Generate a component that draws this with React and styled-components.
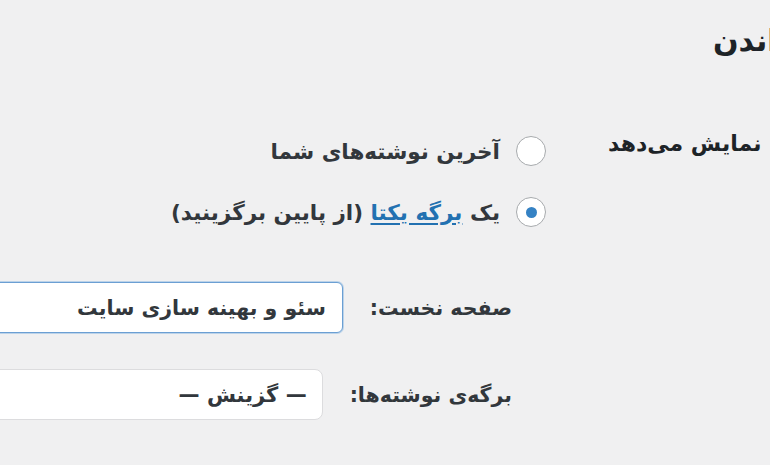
import styled, { createGlobalStyle } from 'styled-components';

const GlobalStyle = createGlobalStyle`
  html, body {
    margin: 0;
    padding: 0;
    overflow: hidden;
    background: #f0f0f1;
  }
  body {
    font-family: "DejaVu Sans", sans-serif;
    color: #32373c;
  }
`;

// the shot is a crop of a wider rtl admin page, so the page runs past the right edge
const Page = styled.div`
  direction: rtl;
  width: 1000px;
  height: 465px;
  padding-top: 20px;
  box-sizing: border-box;
`;

const Title = styled.h1`
  margin: 0;
  padding-left: 713px;
  text-align: left;
  font-size: 30px;
  line-height: 42px;
  font-weight: bold;
  color: #1d2327;
  white-space: nowrap;
`;

const FormTable = styled.div`
  display: grid;
  grid-template-columns: 454px 546px;
  margin-top: 66px;
`;

const RowLabel = styled.div`
  padding-left: 62px;
  text-align: left;
  font-size: 22px;
  line-height: 31px;
  font-weight: bold;
  color: #1d2327;
  white-space: nowrap;
`;

const Field = styled.div`
  display: flex;
  flex-direction: column;
`;

const RadioRow = styled.label`
  display: flex;
  align-items: center;
  gap: 16px;
  height: 46px;
  margin-bottom: 15px;
  font-size: 21.5px;
  font-weight: bold;
  white-space: nowrap;
`;

const Radio = styled.input.attrs({ type: 'radio', readOnly: true })`
  appearance: none;
  margin: 0;
  flex-shrink: 0;
  width: 30px;
  height: 30px;
  border-radius: 50%;
  border: 1.5px solid #a7aaad;
  background: #fff;
  box-sizing: border-box;
  display: grid;
  place-items: center;
  &:checked::before {
    content: '';
    width: 11px;
    height: 11px;
    border-radius: 50%;
    background: #3582c4;
  }
`;

const Link = styled.a`
  color: #2271b1;
  text-decoration: underline;
  text-underline-offset: 3px;
`;

const SubList = styled.div`
  display: flex;
  flex-direction: column;
  gap: 36px;
  margin-top: 32px;
  padding-right: 34px;
`;

const SubRow = styled.label`
  display: flex;
  align-items: center;
  gap: 27px;
  font-size: 20.5px;
  font-weight: bold;
  white-space: nowrap;
`;

const TextInput = styled.input`
  flex-shrink: 0;
  width: 420px;
  height: 51px;
  box-sizing: border-box;
  padding: 0 16px;
  direction: rtl;
  font-family: inherit;
  font-size: 20.5px;
  font-weight: bold;
  color: #32373c;
  background: #fff;
  border: 1px solid #6b9fd3;
  border-radius: 6px;
  box-shadow: 0 0 0 1px rgba(91, 157, 217, 0.35);
  outline: none;
`;

const Select = styled.select`
  flex-shrink: 0;
  width: 420px;
  height: 51px;
  box-sizing: border-box;
  padding: 0 15px;
  appearance: none;
  direction: rtl;
  font-family: inherit;
  font-size: 21px;
  font-weight: bold;
  color: #32373c;
  background: #fff;
  border: 1px solid #dcdcde;
  border-radius: 8px;
  outline: none;
`;

export default function App() {
  return (
    <>
      <GlobalStyle />
      <Page>
        <Title>تنظیمات خواندن</Title>
        <FormTable>
          <RowLabel>برگه‌ی نخست شما نمایش می‌دهد</RowLabel>
          <Field>
            <RadioRow>
              <Radio name="show_on_front" />
              آخرین نوشته‌های شما
            </RadioRow>
            <RadioRow>
              <Radio name="show_on_front" defaultChecked />
              <span>
                یک <Link href="#">برگه یکتا</Link> (از پایین برگزینید)
              </span>
            </RadioRow>
            <SubList>
              <SubRow>
                صفحه نخست:
                <TextInput readOnly value="سئو و بهینه سازی سایت" />
              </SubRow>
              <SubRow>
                برگه‌ی نوشته‌ها:
                <Select defaultValue="0">
                  <option value="0">— گزینش —</option>
                </Select>
              </SubRow>
            </SubList>
          </Field>
        </FormTable>
      </Page>
    </>
  );
}
